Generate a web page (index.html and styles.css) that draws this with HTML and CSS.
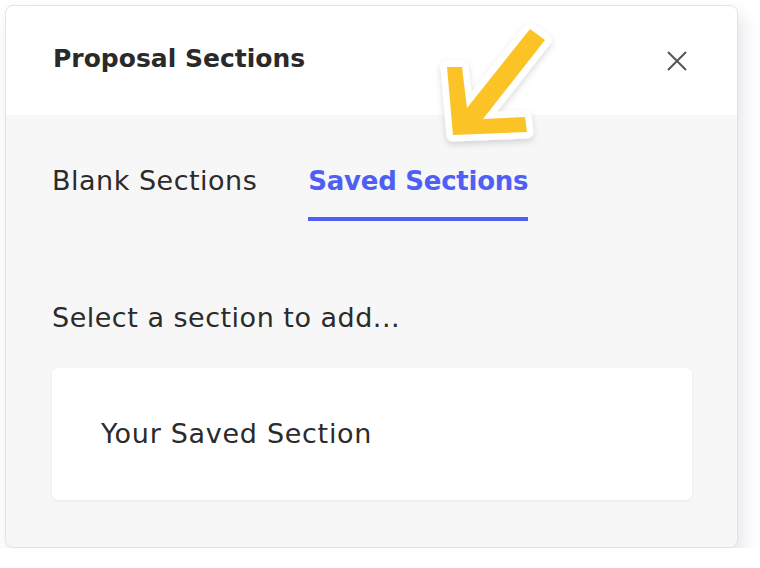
FILE: index.html
```html
<!DOCTYPE html>
<html>
<head>
<meta charset="utf-8">
<link rel="stylesheet" href="styles.css">
</head>
<body>
<div class="card">
  <div class="header">
    <h1 class="title">Proposal Sections</h1>
    <button class="close" aria-label="Close">
      <svg width="20" height="20" viewBox="0 0 20 20"><path d="M1 1 L19 19 M19 1 L1 19" stroke="#555" stroke-width="2" fill="none"/></svg>
    </button>
  </div>
  <div class="content">
    <div class="tabs">
      <div class="tab">Blank Sections</div>
      <div class="tab active">Saved Sections</div>
    </div>
    <p class="hint">Select a section to add...</p>
    <div class="item">Your Saved Section</div>
  </div>
</div>
<svg class="arrow" width="140" height="140" viewBox="430 15 140 140">
  <defs>
    <filter id="sh" x="-20%" y="-20%" width="140%" height="140%">
      <feDropShadow dx="0" dy="3" stdDeviation="3" flood-color="#000" flood-opacity="0.15"/>
    </filter>
  </defs>
  <polygon points="530,29 545,40 483,119 525,117 527,132 453,135 447,67 462,67 467,108" fill="#fff" stroke="#fff" stroke-width="13" stroke-linejoin="round" filter="url(#sh)"/>
  <polygon points="530,29 545,40 483,119 525,117 527,132 453,135 447,67 462,67 467,108" fill="#fbc326"/>
</svg>
</body>
</html>
```
FILE: styles.css
```css
html, body {
  margin: 0;
  padding: 0;
  background: #ffffff;
  font-family: "DejaVu Sans", "Open Sans", sans-serif;
  color: #2b2b2b;
}
.card {
  margin: 5px 0 0 5px;
  width: 731px;
  height: 541px;
  border: 1px solid #e2e2e2;
  border-radius: 8px;
  box-shadow: 5px 10px 18px rgba(40, 40, 90, 0.12);
  overflow: hidden;
  background: #f7f7f7;
  display: flex;
  flex-direction: column;
}
.header {
  height: 109px;
  background: #ffffff;
  display: flex;
  align-items: center;
  justify-content: space-between;
  padding: 0 50px 0 47px;
}
.title {
  margin: 0 0 4px 0;
  font-size: 25px;
  font-weight: 700;
  color: #2a2a2a;
}
.close {
  border: 0;
  background: none;
  padding: 0;
  width: 20px;
  height: 20px;
  display: block;
}
.close svg { display: block; }
.content {
  padding: 0 45px 0 46px;
}
.tabs {
  display: flex;
  gap: 51px;
  margin-top: 50px;
}
.tab {
  font-size: 27px;
  letter-spacing: 0.5px;
  color: #2b2b2b;
  padding-bottom: 20px;
  border-bottom: 4px solid transparent;
  line-height: 32px;
}
.tab.active {
  font-size: 26px;
  letter-spacing: -0.25px;
  color: #4f5ff5;
  font-weight: 700;
  border-bottom-color: #4f5ff5;
}
.hint {
  margin: 81px 0 0 0;
  font-size: 27px;
  letter-spacing: 0.5px;
  line-height: 32px;
  color: #2b2b2b;
}
.item {
  margin-top: 34px;
  height: 132px;
  background: #ffffff;
  border-radius: 6px;
  box-shadow: 0 1px 3px rgba(0, 0, 0, 0.07);
  display: flex;
  align-items: center;
  padding-left: 49px;
  padding-bottom: 2px;
  box-sizing: border-box;
  font-size: 27px;
  letter-spacing: 0.7px;
  color: #2b2b2b;
}
.arrow {
  position: absolute;
  left: 430px;
  top: 15px;
}
```
